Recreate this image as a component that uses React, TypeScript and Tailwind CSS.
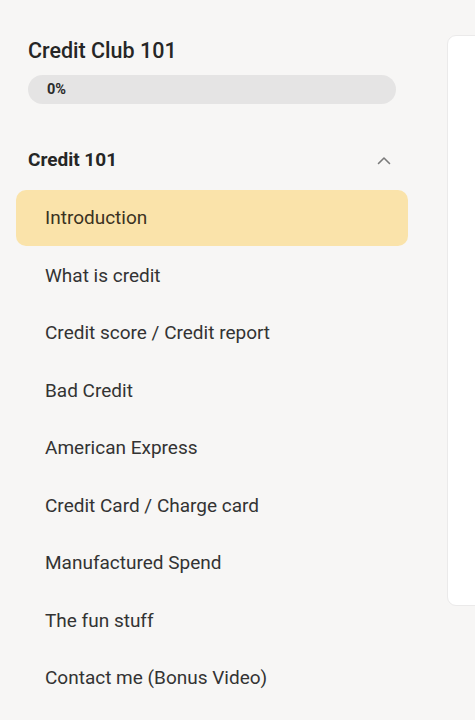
import { useState } from "react";

const LESSONS = [
  "Introduction",
  "What is credit",
  "Credit score / Credit report",
  "Bad Credit",
  "American Express",
  "Credit Card / Charge card",
  "Manufactured Spend",
  "The fun stuff",
  "Contact me (Bonus Video)",
];

function ChevronUp() {
  return (
    <svg width="14" height="9" viewBox="0 0 14 9" fill="none">
      <polyline
        points="1.5,7.5 7,2 12.5,7.5"
        stroke="#7a7a7a"
        strokeWidth="1.6"
        strokeLinecap="round"
        strokeLinejoin="round"
      />
    </svg>
  );
}

export default function App() {
  const [active, setActive] = useState(0);

  return (
    <div
      className="flex h-[720px] w-[475px] overflow-hidden bg-[#f7f6f5] text-[#262626]"
      style={{ fontFamily: "Roboto, 'Noto Sans', sans-serif" }}
    >
      <aside className="w-[408px] shrink-0 pl-4 pt-[37px]">
        <div className="px-3">
          <h1 className="text-[21.5px] font-medium leading-[28px]">
            Credit Club 101
          </h1>
          <div className="mt-[10px] flex h-[29px] w-[368px] items-center rounded-full bg-[#e5e4e4] px-[19px]">
            <span className="text-[14.5px] font-bold text-[#2b2b2b]">0%</span>
          </div>
        </div>

        <div className="mt-[44px] flex items-center justify-between pl-3 pr-[17px]">
          <h2 className="text-[19px] font-bold leading-[24px]">Credit 101</h2>
          <ChevronUp />
        </div>

        <ul className="mt-[18px] flex flex-col gap-[1.5px]">
          {LESSONS.map((title, i) => (
            <li key={title}>
              <button
                onClick={() => setActive(i)}
                className={
                  i === active
                    ? "flex h-[56px] w-full items-center rounded-[10px] bg-[#fae3aa] pl-[29px] pt-[1px] text-left text-[19px] text-[#3a3222]"
                    : "flex h-[56px] w-full items-center rounded-[10px] pl-[29px] pt-[1px] text-left text-[19px] text-[#333333]"
                }
              >
                {title}
              </button>
            </li>
          ))}
        </ul>
      </aside>

      <main className="ml-[39px] mt-[35px] h-[571px] w-[200px] shrink-0 rounded-[9px] border border-[#ebeaea] bg-white" />
    </div>
  );
}
